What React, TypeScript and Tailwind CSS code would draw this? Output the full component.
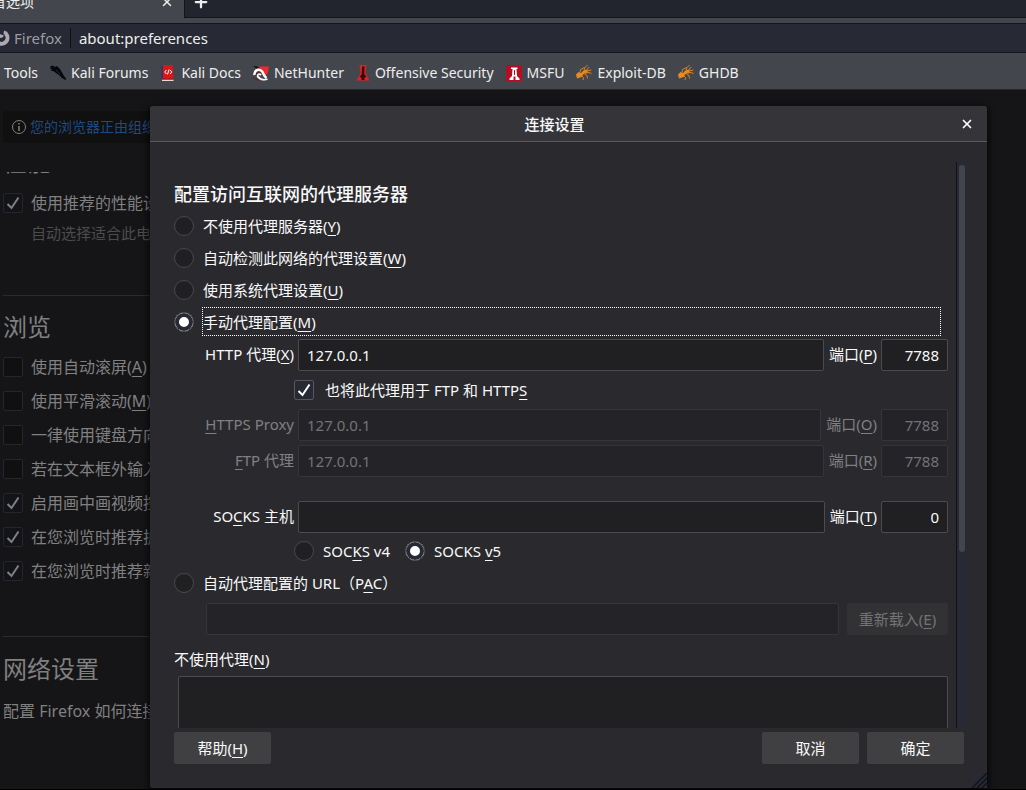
import type { ReactNode } from "react";
import { Plus, X } from "lucide-react";
import clsx from "clsx";

const fontStack = "font-['Noto_Sans','Noto_Sans_CJK_SC',sans-serif]";

function Key({ children }: { children: ReactNode }) {
  return (
    <span className="underline underline-offset-3 decoration-1 [text-decoration-skip-ink:none]">
      {children}
    </span>
  );
}

function FirefoxIcon() {
  return (
    <svg viewBox="0 0 16 16" className="size-4" fill="none">
      <path
        d="M2.500 4.500A6 6 0 1 0 12 3.800"
        stroke="#a9abb0"
        strokeWidth="4"
      />
      <path d="M10 .500l3.500 1.500L12 5.500 9.500 4z" fill="#a9abb0" />
      <path d="M4 3l3 1.500 3 1-1.500 2-2.500.5-2 1.500z" fill="#a9abb0" />
    </svg>
  );
}

function KaliIcon() {
  return (
    <svg viewBox="0 0 16 16" className="size-4">
      <path
        d="M0 1.500L3 .500l2 1.500 2-1 3 3 2 3.500 2 3.500 2.500 3-1 1-3.500-2-3-3-3-2-2-1.500z"
        fill="#07080a"
      />
      <path d="M0 3l5 3M1 5l4 1" stroke="#07080a" />
      <path d="M6 5l4 4" stroke="#43464d" strokeWidth=".5" />
    </svg>
  );
}

function DocsIcon() {
  return (
    <svg viewBox="0 0 16 16" className="size-4">
      <path d="M1.500 1h2v13h-2z" fill="#26376b" />
      <path d="M3 0h10v14H3z" fill="#dc1518" />
      <path d="M2 14.500h11.500V16H2z" fill="#e8d8d2" />
      <path d="M2 13.500h11.500v1H2z" fill="#9e1014" />
      <path
        d="M6.500 5L4.700 7l1.800 2M10 5l1.800 2L10 9M9 4.500L7.500 9.500"
        stroke="#fff"
        fill="none"
      />
    </svg>
  );
}

function NetHunterIcon() {
  return (
    <svg viewBox="0 0 16 16" className="size-4">
      <path d="M2 2.500l5-1h9l-1 6-3 4.500L8 4z" fill="#ee2a30" />
      <path d="M0 1h3l4 1.500-4 1z" fill="#17181c" />
      <path
        d="M1.500 10C1 5.500 5 3.500 8 5.500s2 5 5.500 7.500"
        stroke="#fff"
        strokeWidth="2.500"
        fill="none"
      />
      <path
        d="M14.500 14c-3 1.500-7 .500-9.500-2-1.500-2 1-4 3-2"
        stroke="#fff"
        strokeWidth="1.800"
        fill="none"
      />
      <path
        d="M3.500 10.500c0-3 3-4 4.500-2.500M0 12c2 2 3 3 6 3"
        stroke="#7b1216"
        fill="none"
      />
    </svg>
  );
}

function OffsecIcon() {
  return (
    <svg viewBox="0 0 14 16" className="h-4 w-3.5">
      <path d="M3.500 0h7L9.500 8l4 7.500H.500L4.500 8z" fill="#e02023" />
      <path
        d="M6 1.500h2.500L8.200 9l2.300 3-2 .5V15h-3v-2.500l-2-.5 2.300-3z"
        fill="#37090b"
      />
    </svg>
  );
}

function MsfuIcon() {
  return (
    <svg viewBox="0 0 16 16" className="size-4">
      <path d="M0 0h16v16H0z" fill="#b50d22" />
      <path
        d="M5 2.500h6.500V4h-1l.500 7 2.500 2.500V15H9.500v-3.500h-2V15H3.500v-1.500L6 11l.500-7H5z"
        fill="#fff"
      />
      <path d="M8 5h1v5H8z" fill="#b50d22" />
    </svg>
  );
}

function SpiderIcon() {
  return (
    <svg viewBox="0 0 16 16" className="size-4">
      <path
        d="M0 9.500L2.500 7 5 8l2.500-2.500 3-1 1.500 1.500-1.500 2-3 1L5.500 12 1 13.500z"
        fill="#ea8a1c"
      />
      <path
        d="M4 7.500l.500-3 4-2M8 5.500L9 2.500 11.500 0M11 5l2-3M11.500 6l4-1M10 8l3-.500 2.500 1M8.500 9l2.500 1.500.5 3M6 11l1.500 1.500L7 15"
        stroke="#ea8a1c"
        strokeWidth=".9"
        fill="none"
      />
    </svg>
  );
}

const bookmarks = [
  { name: "Kali Forums", icon: <KaliIcon /> },
  { name: "Kali Docs", icon: <DocsIcon /> },
  { name: "NetHunter", icon: <NetHunterIcon /> },
  { name: "Offensive Security", icon: <OffsecIcon /> },
  { name: "MSFU", icon: <MsfuIcon /> },
  { name: "Exploit-DB", icon: <SpiderIcon /> },
  { name: "GHDB", icon: <SpiderIcon /> },
];

function BrowserChrome() {
  return (
    <header className="shrink-0 bg-[#43464d] text-[15px] leading-5 text-[#eeeeec]">
      <div className="flex h-[18px] items-end overflow-hidden">
        <div className="flex h-8 w-46 shrink-0 items-center justify-between pr-2.5">
          <span className="-ml-2 text-[14px]">首选项</span>
          <button aria-label="关闭标签页">
            <X className="size-3.5" strokeWidth={2.5} />
          </button>
        </div>
        <div className="flex h-8 flex-1 items-center border-b border-l border-[#14151a] bg-[#23252e] pl-[7px]">
          <button aria-label="新建标签页">
            <Plus className="size-4.5" strokeWidth={3} />
          </button>
        </div>
      </div>
      <div className="mt-[5px] flex h-[30px] items-center border-y border-[#14151a] bg-[#272935]">
        <div className="-ml-1.5 flex items-center gap-1 text-[#9a9ca2]">
          <FirefoxIcon />
          <span>Firefox</span>
        </div>
        <div className="mx-2 h-5 w-px bg-[#101116]" />
        <input
          aria-label="地址"
          defaultValue="about:preferences"
          className="min-w-0 flex-1 bg-transparent outline-none"
        />
      </div>
      <nav className="flex h-[37px] items-center gap-3 border-b border-[#24262b] pb-px pl-1 pt-1 text-sm leading-5 whitespace-nowrap">
        <a href="#tools">Tools</a>
        {bookmarks.map((b) => (
          <a
            key={b.name}
            href="#bookmark"
            className="flex items-center gap-[5px]"
          >
            {b.icon}
            {b.name}
          </a>
        ))}
      </nav>
    </header>
  );
}

type CheckProps = { id: string; checked?: boolean; dim?: boolean };

function Checkbox({ id, checked, dim }: CheckProps) {
  return (
    <span className="grid size-5 shrink-0">
      <input
        type="checkbox"
        id={id}
        defaultChecked={checked}
        className={clsx(
          "peer size-5 appearance-none rounded-[2px] border [grid-area:1/1]",
          dim
            ? "border-[#26262a] bg-[#101010] checked:bg-[#13141a]"
            : "border-[#55575f] bg-[#202022] checked:bg-[#272935]",
        )}
      />
      <svg
        viewBox="0 0 20 20"
        className={clsx(
          "pointer-events-none invisible size-5 [grid-area:1/1] peer-checked:visible",
          dim ? "text-[#808081]" : "text-white",
        )}
      >
        <path
          d="M4.500 11l4 4L15.500 4.500"
          fill="none"
          stroke="currentColor"
          strokeWidth="2"
        />
      </svg>
    </span>
  );
}

const browsing = [
  { text: "使用自动滚屏", hotkey: "A" },
  { text: "使用平滑滚动", hotkey: "M" },
  { text: "一律使用键盘方向" },
  { text: "若在文本框外输入" },
  { text: "启用画中画视频控", checked: true },
  { text: "在您浏览时推荐扩", id: "extensions", checked: true },
  { text: "在您浏览时推荐新", id: "features", checked: true },
];

function Preferences() {
  return (
    <main className="h-full w-4/5 overflow-hidden whitespace-nowrap pl-[3px] pt-[21px] text-base leading-5 text-[#808081]">
      <div className="flex h-8 w-1/2 items-center gap-[3px] rounded-xs bg-[#101011] pl-2 text-[14px]">
        <svg
          viewBox="0 0 16 16"
          className="size-4"
          fill="none"
          stroke="currentColor"
        >
          <circle cx="8" cy="8" r="6.500" />
          <path d="M8 7v5M8 4v1.500" strokeWidth="1.500" />
        </svg>
        <a href="#policy" className="text-[#1f4a80]">
          您的浏览器正由组织
        </a>
      </div>

      <div className="mt-[29px] flex h-1 items-end overflow-hidden">
        <h2 className="text-2xl leading-7">性能</h2>
      </div>
      <div className="mt-[17px] flex h-5 items-center gap-2">
        <Checkbox id="perf" checked dim />
        <label htmlFor="perf">使用推荐的性能设</label>
      </div>
      <p className="ml-7 mt-2.5 text-[15px] text-[#4c4c4d]">
        自动选择适合此电
      </p>

      <hr className="mt-[52px] border-[#2a2a2c]" />
      <h2 className="mt-[17px] text-2xl leading-7">浏览</h2>
      <div className="mt-4 flex flex-col gap-3.5">
        {browsing.map((item, i) => (
          <div key={item.text} className="flex h-5 items-center gap-2">
            <Checkbox id={`browse-${i}`} checked={item.checked} dim />
            <label htmlFor={`browse-${i}`}>
              {item.text}
              {item.hotkey && (
                <>
                  (<Key>{item.hotkey}</Key>)
                </>
              )}
            </label>
          </div>
        ))}
      </div>

      <hr className="mt-[55px] border-[#2a2a2c]" />
      <h2 className="mt-[18px] text-2xl leading-7">网络设置</h2>
      <p className="mt-[18px]">配置 Firefox 如何连接</p>
    </main>
  );
}

type RadioProps = {
  id: string;
  name: string;
  checked?: boolean;
};

function Radio({ id, name, checked }: RadioProps) {
  return (
    <input
      type="radio"
      id={id}
      name={name}
      defaultChecked={checked}
      className="size-5 shrink-0 appearance-none rounded-full border border-[#4a4a4e] bg-[#202022] checked:bg-white checked:shadow-[inset_0_0_0_4px_#272935]"
    />
  );
}

type ProxyRowProps = {
  id: string;
  label: ReactNode;
  hotkey: string;
  host?: string;
  port: string;
  disabled?: boolean;
};

const field =
  "h-8 rounded-[2px] border border-[#4c4c50] bg-[#202022] px-2 pb-px outline-none disabled:border-[#363639] disabled:bg-[#242428] disabled:text-[#737375]";

function ProxyRow({ id, label, hotkey, host, port, disabled }: ProxyRowProps) {
  return (
    <div
      className={clsx("flex items-center gap-1", disabled && "text-[#808082]")}
    >
      <label htmlFor={id} className="w-30 shrink-0 pb-0.5 text-right">
        {label}
      </label>
      <input
        id={id}
        defaultValue={host}
        disabled={disabled}
        className={clsx(field, "min-w-0 flex-1")}
      />
      <label htmlFor={`${id}-port`} className="pb-0.5 pl-px">
        端口(<Key>{hotkey}</Key>)
      </label>
      <input
        id={`${id}-port`}
        defaultValue={port}
        disabled={disabled}
        className={clsx(field, "w-[67px] text-right")}
      />
    </div>
  );
}

const modes = [
  { id: "none", text: "不使用代理服务器", hotkey: "Y" },
  { id: "detect", text: "自动检测此网络的代理设置", hotkey: "W" },
  { id: "system", text: "使用系统代理设置", hotkey: "U" },
  { id: "manual", text: "手动代理配置", hotkey: "M", checked: true },
];

function ProxyForm() {
  return (
    <form className="min-w-0 flex-1 pr-2 pt-5">
      <h3 className="text-lg font-medium leading-6">
        配置访问互联网的代理服务器
      </h3>
      <div className="mt-1">
        {modes.map((m) => (
          <div key={m.id} className="flex h-8 items-center gap-2">
            <Radio id={m.id} name="mode" checked={m.checked} />
            <label
              htmlFor={m.id}
              className={clsx(
                "mb-px mr-[7px] flex h-[29px] flex-1 items-center border border-dotted",
                m.checked ? "border-white" : "border-transparent",
              )}
            >
              <span>
                {m.text}(<Key>{m.hotkey}</Key>)
              </span>
            </label>
          </div>
        ))}
      </div>
      <div className="mt-px">
        <ProxyRow
          id="http"
          label={
            <>
              HTTP 代理(<Key>X</Key>)
            </>
          }
          hotkey="P"
          host="127.0.0.1"
          port="7788"
        />
        <div className="ml-30 flex h-[38px] items-center gap-[11px]">
          <Checkbox id="share" checked />
          <label htmlFor="share" className="pb-px">
            也将此代理用于 FTP 和 HTTP<Key>S</Key>
          </label>
        </div>
        <div className="flex flex-col gap-1">
          <ProxyRow
            id="https"
            label={
              <>
                <Key>H</Key>TTPS Proxy
              </>
            }
            hotkey="O"
            host="127.0.0.1"
            port="7788"
            disabled
          />
          <ProxyRow
            id="ftp"
            label={
              <>
                <Key>F</Key>TP 代理
              </>
            }
            hotkey="R"
            host="127.0.0.1"
            port="7788"
            disabled
          />
        </div>
        <div className="mt-6">
          <ProxyRow
            id="socks"
            label={
              <>
                SO<Key>C</Key>KS 主机
              </>
            }
            hotkey="T"
            port="0"
          />
        </div>
        <div className="ml-30 flex h-9 items-center gap-[9px]">
          <Radio id="v4" name="socks-version" />
          <label htmlFor="v4" className="pr-1.5">
            SOC<Key>K</Key>S v4
          </label>
          <Radio id="v5" name="socks-version" checked />
          <label htmlFor="v5">
            SOCKS <Key>v</Key>5
          </label>
        </div>
        <div className="flex h-7 items-center gap-[9px]">
          <Radio id="pac" name="mode" />
          <label htmlFor="pac">
            自动代理配置的 URL（P<Key>A</Key>C）
          </label>
        </div>
      </div>
      <div className="ml-8 mt-1.5 flex gap-2">
        <input
          aria-label="自动代理配置的 URL"
          disabled
          className={clsx(field, "min-w-0 flex-1")}
        />
        <button
          type="button"
          disabled
          className="h-8 w-[101px] rounded-[2px] bg-[#323234] text-[#737375]"
        >
          重新载入(<Key>E</Key>)
        </button>
      </div>
      <label htmlFor="no-proxy" className="mt-3.5 block">
        不使用代理(<Key>N</Key>)
      </label>
      <textarea
        id="no-proxy"
        className="ml-1 mt-[7px] block h-24 w-[calc(100%-4px)] resize-none rounded-[2px] border border-[#4c4c50] bg-[#202022] outline-none"
      />
    </form>
  );
}

const dialogButton = "h-8 w-[97px] rounded-[2px] bg-[#404042]";

function ConnectionDialog() {
  return (
    <section
      role="dialog"
      aria-labelledby="dialog-title"
      className="relative flex min-w-0 flex-1 flex-col rounded-[3px] bg-[#2a2a2e] text-[15px] leading-5 text-[#f9f9fa] shadow-[0_2px_8px_#000]"
    >
      <div className="flex h-9 shrink-0 items-center rounded-t-[3px] border-b border-[#58585c] bg-[#353539] pr-3">
        <h1 id="dialog-title" className="flex-1 text-center font-medium">
          连接设置
        </h1>
        <button aria-label="关闭" className="p-px">
          <X className="size-3.5" strokeWidth={3} />
        </button>
      </div>
      <div className="mt-5 flex min-h-0 flex-1 overflow-hidden pl-6 pr-5">
        <ProxyForm />
        <div className="w-[11px] border-l border-[#111217] bg-[#272935] pl-0.5 pt-[3px]">
          <div className="h-[387px] w-1.5 rounded-full bg-[#42454c]" />
        </div>
      </div>
      <div className="flex shrink-0 gap-2 pb-6 pl-6 pr-[23px] pt-1">
        <button className={clsx(dialogButton, "mr-auto")}>
          帮助(<Key>H</Key>)
        </button>
        <button className={dialogButton}>取消</button>
        <button className={dialogButton}>确定</button>
      </div>
      <svg
        viewBox="0 0 15 15"
        className="absolute bottom-0 right-0 size-[15px]"
      >
        <path d="M0 0h15v15H0z" fill="#272935" />
        <path
          d="M0 15L15 0M5 15L15 5M10 15l5-5"
          stroke="#111217"
          strokeWidth="1.500"
        />
      </svg>
    </section>
  );
}

export default function App() {
  return (
    <div
      lang="zh-CN"
      className={clsx(
        "flex h-screen flex-col overflow-hidden bg-[#151517]",
        fontStack,
      )}
    >
      <BrowserChrome />
      <div className="relative min-h-0 flex-1 border-b border-black">
        <Preferences />
        <div className="absolute inset-0 flex pb-px pl-[150px] pr-[39px] pt-4">
          <ConnectionDialog />
        </div>
      </div>
    </div>
  );
}
